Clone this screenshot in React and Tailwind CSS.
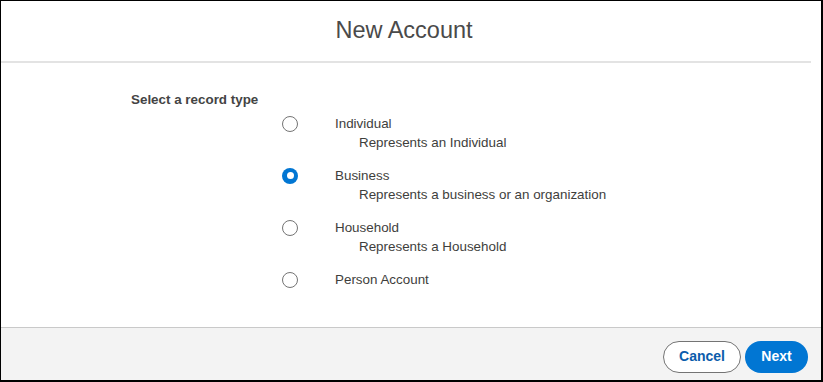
import {useState} from "react";

const recordTypes = [
    {id: "individual", label: "Individual", description: "Represents an Individual"},
    {id: "business", label: "Business", description: "Represents a business or an organization"},
    {id: "household", label: "Household", description: "Represents a Household"},
    {id: "person", label: "Person Account", description: null},
];

function Radio({checked}) {
    if (checked) {
        return (
            <span className="flex h-4 w-4 shrink-0 items-center justify-center rounded-full bg-[#0176d3]">
                <span className="h-[7px] w-[7px] rounded-full bg-white"></span>
            </span>
        );
    }
    return <span className="block h-4 w-4 shrink-0 rounded-full border border-[#747474] bg-white"></span>;
}

export default function App() {
    const [selected, setSelected] = useState("business");

    return (
        <div
            className="flex h-[382px] w-[823px] flex-col border-l border-t border-r-2 border-b-2 border-black bg-white text-[13.4px] text-[#3e3e3c]"
            style={{fontFamily: '"Liberation Sans", Arial, sans-serif'}}>
            <div className="mr-[14px] flex h-[60px] shrink-0 items-center justify-center">
                <h2 className="text-[23.5px] leading-none text-[#4a4a4a]">New Account</h2>
            </div>
            <div className="mr-[10px] border-b-2 border-[#e3e3e3]"></div>
            <div className="flex-1 pl-[130px] pt-[27px]">
                <div className="text-[13.4px] font-bold leading-[20px] text-[#444444]">Select a record type</div>
                <div className="ml-[151px] mt-[4px] flex flex-col gap-[14px]">
                    {recordTypes.map(type => (
                        <label key={type.id} className="flex cursor-pointer items-start"
                               onClick={() => setSelected(type.id)}>
                            <span className="flex h-[19px] w-4 items-center">
                                <Radio checked={selected === type.id}/>
                            </span>
                            <span className="ml-[37px] flex flex-col">
                                <span className="leading-[19px]">{type.label}</span>
                                {type.description &&
                                    <span className="pl-[24px] leading-[19px]">{type.description}</span>}
                            </span>
                        </label>
                    ))}
                </div>
            </div>
            <div className="flex h-[53px] shrink-0 items-center justify-end gap-1 border-t border-[#c9c9c9] bg-[#f3f3f3] pr-[13px] pt-[5px]">
                <button
                    className="flex h-[32px] w-[78px] items-center justify-center rounded-full border border-[#747474] bg-white text-[14px] font-bold text-[#0b5cab]">
                    Cancel
                </button>
                <button
                    className="flex h-[32px] w-[63px] items-center justify-center rounded-full bg-[#0176d3] text-[14px] font-bold text-white">
                    Next
                </button>
            </div>
        </div>
    );
}
